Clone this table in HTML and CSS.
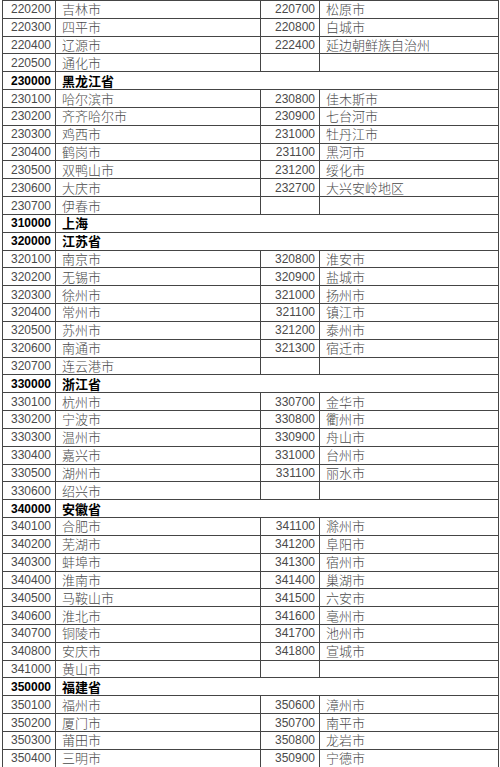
FILE: index.html
```html
<!DOCTYPE html>
<html lang="zh">
<head>
<meta charset="utf-8">
<link rel="stylesheet" href="styles.css">
</head>
<body>
<table class="codes">
<colgroup><col class="c1"><col class="c2"><col class="c3"><col class="c4"></colgroup>
<tbody>
<tr><td class="code">220200</td><td class="name">吉林市</td><td class="code">220700</td><td class="name">松原市</td></tr>
<tr><td class="code">220300</td><td class="name">四平市</td><td class="code">220800</td><td class="name">白城市</td></tr>
<tr><td class="code">220400</td><td class="name">辽源市</td><td class="code">222400</td><td class="name">延边朝鲜族自治州</td></tr>
<tr><td class="code">220500</td><td class="name">通化市</td><td class="code"></td><td class="name"></td></tr>
<tr class="prov"><td class="code">230000</td><td class="name" colspan="3">黑龙江省</td></tr>
<tr><td class="code">230100</td><td class="name">哈尔滨市</td><td class="code">230800</td><td class="name">佳木斯市</td></tr>
<tr><td class="code">230200</td><td class="name">齐齐哈尔市</td><td class="code">230900</td><td class="name">七台河市</td></tr>
<tr><td class="code">230300</td><td class="name">鸡西市</td><td class="code">231000</td><td class="name">牡丹江市</td></tr>
<tr><td class="code">230400</td><td class="name">鹤岗市</td><td class="code">231100</td><td class="name">黑河市</td></tr>
<tr><td class="code">230500</td><td class="name">双鸭山市</td><td class="code">231200</td><td class="name">绥化市</td></tr>
<tr><td class="code">230600</td><td class="name">大庆市</td><td class="code">232700</td><td class="name">大兴安岭地区</td></tr>
<tr><td class="code">230700</td><td class="name">伊春市</td><td class="code"></td><td class="name"></td></tr>
<tr class="prov"><td class="code">310000</td><td class="name" colspan="3">上海</td></tr>
<tr class="prov"><td class="code">320000</td><td class="name" colspan="3">江苏省</td></tr>
<tr><td class="code">320100</td><td class="name">南京市</td><td class="code">320800</td><td class="name">淮安市</td></tr>
<tr><td class="code">320200</td><td class="name">无锡市</td><td class="code">320900</td><td class="name">盐城市</td></tr>
<tr><td class="code">320300</td><td class="name">徐州市</td><td class="code">321000</td><td class="name">扬州市</td></tr>
<tr><td class="code">320400</td><td class="name">常州市</td><td class="code">321100</td><td class="name">镇江市</td></tr>
<tr><td class="code">320500</td><td class="name">苏州市</td><td class="code">321200</td><td class="name">泰州市</td></tr>
<tr><td class="code">320600</td><td class="name">南通市</td><td class="code">321300</td><td class="name">宿迁市</td></tr>
<tr><td class="code">320700</td><td class="name">连云港市</td><td class="code"></td><td class="name"></td></tr>
<tr class="prov"><td class="code">330000</td><td class="name" colspan="3">浙江省</td></tr>
<tr><td class="code">330100</td><td class="name">杭州市</td><td class="code">330700</td><td class="name">金华市</td></tr>
<tr><td class="code">330200</td><td class="name">宁波市</td><td class="code">330800</td><td class="name">衢州市</td></tr>
<tr><td class="code">330300</td><td class="name">温州市</td><td class="code">330900</td><td class="name">舟山市</td></tr>
<tr><td class="code">330400</td><td class="name">嘉兴市</td><td class="code">331000</td><td class="name">台州市</td></tr>
<tr><td class="code">330500</td><td class="name">湖州市</td><td class="code">331100</td><td class="name">丽水市</td></tr>
<tr><td class="code">330600</td><td class="name">绍兴市</td><td class="code"></td><td class="name"></td></tr>
<tr class="prov"><td class="code">340000</td><td class="name" colspan="3">安徽省</td></tr>
<tr><td class="code">340100</td><td class="name">合肥市</td><td class="code">341100</td><td class="name">滁州市</td></tr>
<tr><td class="code">340200</td><td class="name">芜湖市</td><td class="code">341200</td><td class="name">阜阳市</td></tr>
<tr><td class="code">340300</td><td class="name">蚌埠市</td><td class="code">341300</td><td class="name">宿州市</td></tr>
<tr><td class="code">340400</td><td class="name">淮南市</td><td class="code">341400</td><td class="name">巢湖市</td></tr>
<tr><td class="code">340500</td><td class="name">马鞍山市</td><td class="code">341500</td><td class="name">六安市</td></tr>
<tr><td class="code">340600</td><td class="name">淮北市</td><td class="code">341600</td><td class="name">亳州市</td></tr>
<tr><td class="code">340700</td><td class="name">铜陵市</td><td class="code">341700</td><td class="name">池州市</td></tr>
<tr><td class="code">340800</td><td class="name">安庆市</td><td class="code">341800</td><td class="name">宣城市</td></tr>
<tr><td class="code">341000</td><td class="name">黄山市</td><td class="code"></td><td class="name"></td></tr>
<tr class="prov"><td class="code">350000</td><td class="name" colspan="3">福建省</td></tr>
<tr><td class="code">350100</td><td class="name">福州市</td><td class="code">350600</td><td class="name">漳州市</td></tr>
<tr><td class="code">350200</td><td class="name">厦门市</td><td class="code">350700</td><td class="name">南平市</td></tr>
<tr><td class="code">350300</td><td class="name">莆田市</td><td class="code">350800</td><td class="name">龙岩市</td></tr>
<tr><td class="code">350400</td><td class="name">三明市</td><td class="code">350900</td><td class="name">宁德市</td></tr>
</tbody>
</table>
</body>
</html>
```

FILE: styles.css
```css
html, body {
  margin: 0;
  padding: 0;
  background: #ffffff;
}

body {
  padding-left: 2px;
}

.codes {
  border-collapse: collapse;
  table-layout: fixed;
  width: 496px;
  color: #4a4a4a;
}

.c1 { width: 53px; }
.c2 { width: 205px; }
.c3 { width: 59px; }
.c4 { width: 179px; }

.codes tr {
  height: 17.84px;
}

.codes td {
  border: 1px solid #454545;
  padding: 0;
  height: 16.84px;
  line-height: 16px;
  white-space: nowrap;
  overflow: hidden;
  vertical-align: middle;
}

.code {
  font-family: "Liberation Sans", Arial, sans-serif;
  font-size: 12px;
  text-align: right;
  padding-right: 4px !important;
}

.name {
  font-family: "Noto Sans CJK SC", sans-serif;
  font-size: 13px;
  font-weight: 300;
  text-align: left;
  padding-left: 6px !important;
}

.prov td {
  color: #000000;
  font-weight: bold;
}
```
